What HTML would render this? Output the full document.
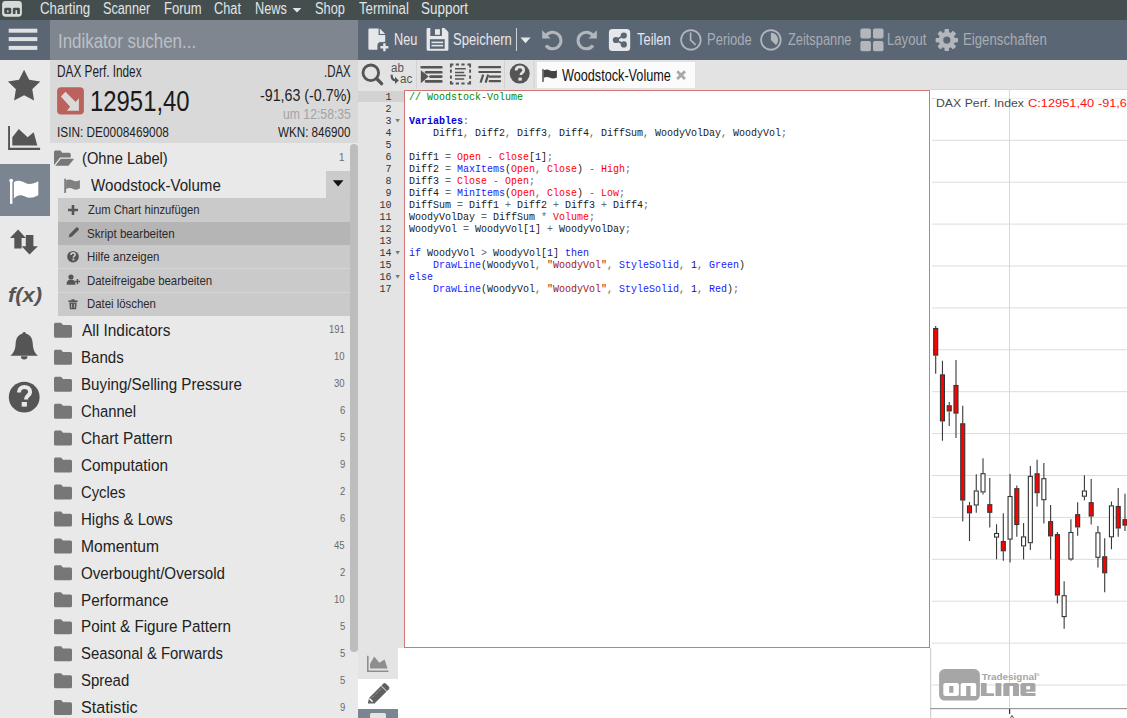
<!DOCTYPE html><html><head><meta charset="utf-8"><style>
html,body{margin:0;padding:0;width:1127px;height:718px;overflow:hidden;background:#fff;font-family:'Liberation Sans',sans-serif}
.t{position:absolute;white-space:pre}

.code,.gnum{position:absolute;font-family:'Liberation Mono',monospace;font-size:12px;line-height:13px;white-space:pre;transform:scale(0.83333,0.923077);color:#1a1a1a}
.code{transform-origin:0 0}
.gnum{transform-origin:100% 0;text-align:right;color:#333}
.code .p{color:#666}
.code .c{color:#008a00}
.code .k{color:#0000e0;font-weight:bold}
.code .k2{color:#1a1ae0}
.code .b{color:#2020ff}
.code .r{color:#ff0000}
.code .s{color:#a31515}
.code .d{color:#101080}
</style></head><body>
<div style="position:absolute;left:0px;top:0px;width:1127px;height:20px;background:#444e4e;"></div>
<div style="position:absolute;left:0px;top:20px;width:50px;height:40px;background:#5b6675;"></div>
<div style="position:absolute;left:50px;top:20px;width:308px;height:40px;background:#7f8690;"></div>
<div style="position:absolute;left:358px;top:20px;width:769px;height:40px;background:#5b6675;"></div>
<div style="position:absolute;left:0px;top:60px;width:50px;height:658px;background:#e9e9e9;"></div>
<div style="position:absolute;left:0px;top:164px;width:50px;height:52px;background:#7b8591;"></div>
<div style="position:absolute;left:50px;top:60px;width:308px;height:83px;background:#d9d9d9;"></div>
<div style="position:absolute;left:50px;top:143px;width:308px;height:575px;background:#e9e9e9;"></div>
<div style="position:absolute;left:326px;top:171px;width:24px;height:27px;background:#cbcbcb;"></div>
<div style="position:absolute;left:58px;top:198px;width:292px;height:118px;background:#cacaca;"></div>
<div style="position:absolute;left:58px;top:222px;width:292px;height:23px;background:#b5b5b5;"></div>
<div style="position:absolute;left:58px;top:268px;width:292px;height:1px;background:#d6d6d6;"></div>
<div style="position:absolute;left:58px;top:292px;width:292px;height:1px;background:#d6d6d6;"></div>
<div style="position:absolute;left:350px;top:144px;width:8px;height:508px;background:#bdbdbd;border-radius:4px"></div>
<div style="position:absolute;left:358px;top:60px;width:769px;height:30px;background:#e3e3e3;"></div>
<div style="position:absolute;left:537px;top:62px;width:158px;height:26px;background:#fbfbfb;"></div>
<div style="position:absolute;left:358px;top:90px;width:46px;height:558px;background:#e4e4e4;"></div>
<div style="position:absolute;left:358px;top:91px;width:46px;height:11px;background:#d2d2d2;"></div>
<div style="position:absolute;left:404px;top:90px;width:526px;height:558px;background:#ffffff;box-sizing:border-box;border:1px solid #d07878"></div>
<div style="position:absolute;left:358px;top:648px;width:572px;height:70px;background:#ffffff;"></div>
<div style="position:absolute;left:358px;top:648px;width:40px;height:31px;background:#e4e4e4;"></div>
<div style="position:absolute;left:358px;top:709px;width:40px;height:9px;background:#7b8591;"></div>
<svg width="1127" height="718" style="position:absolute;left:0;top:0"><rect x="930" y="90" width="197" height="628" fill="#fff"/><rect x="930" y="89" width="197" height="1" fill="#d6d6d6"/><rect x="932" y="98" width="195" height="1" fill="#f0f0f0"/><rect x="932" y="98" width="3" height="1" fill="#d0d0d0"/><rect x="930.2" y="648" width="1" height="70" fill="#c8c8c8"/><rect x="932" y="139.80" width="195" height="1" fill="#dcdcdc"/><rect x="932" y="181.70" width="195" height="1" fill="#dcdcdc"/><rect x="932" y="223.60" width="195" height="1" fill="#dcdcdc"/><rect x="932" y="265.50" width="195" height="1" fill="#dcdcdc"/><rect x="932" y="307.40" width="195" height="1" fill="#dcdcdc"/><rect x="932" y="349.30" width="195" height="1" fill="#dcdcdc"/><rect x="932" y="391.20" width="195" height="1" fill="#dcdcdc"/><rect x="932" y="433.10" width="195" height="1" fill="#dcdcdc"/><rect x="932" y="475.00" width="195" height="1" fill="#dcdcdc"/><rect x="932" y="516.90" width="195" height="1" fill="#dcdcdc"/><rect x="932" y="558.80" width="195" height="1" fill="#dcdcdc"/><rect x="932" y="600.70" width="195" height="1" fill="#dcdcdc"/><rect x="932" y="642.60" width="195" height="1" fill="#dcdcdc"/><rect x="932" y="684.50" width="195" height="1" fill="#dcdcdc"/><rect x="1009" y="90" width="1" height="619" fill="#d8d8d8"/><rect x="930" y="708" width="197" height="1.2" fill="#9a9a9a"/><rect x="1009" y="709" width="1.2" height="5" fill="#333"/><path d="M1010.5,718 l1.5,-2.6 l1.5,2.6" fill="none" stroke="#555" stroke-width="1"/><rect x="939.1" y="669.1" width="40.8" height="31.5" rx="5.5" fill="#a6a6a6"/><rect x="943.3" y="683.1" width="15.6" height="12.9" rx="2" fill="#fff"/><rect x="949.2" y="686" width="4.2" height="6.8" fill="#a6a6a6"/><path d="M960.6,696 v-10.9 a2,2 0 0 1 2,-2 h11.6 a2,2 0 0 1 2,2 v10.9 h-5.6 v-10 h-4.4 v10z" fill="#fff"/><path d="M980.9,683.1 h5.7 v10.2 h7.5 v2.7 h-13.2z" fill="#a6a6a6"/><rect x="995.5" y="683.1" width="5.9" height="12.9" fill="#a6a6a6"/><path d="M1003.3,696 v-10.9 a2,2 0 0 1 2,-2 h11.7 a2,2 0 0 1 2,2 v10.9 h-6 v-10 h-3.8 v10z" fill="#a6a6a6"/><path d="M1022.4,683.1 h11.1 a2,2 0 0 1 2,2 v6.6 h-9.2 v1.4 h9.2 v2.9 h-13.1 a2,2 0 0 1 -2,-2 v-8.9 a2,2 0 0 1 2,-2z" fill="#a6a6a6"/><rect x="1026.3" y="686.2" width="3.8" height="3.2" fill="#fff"/><text x="981.7" y="679.6" font-family="Liberation Sans" font-weight="bold" font-size="8.6" fill="#a6a6a6" textLength="55" lengthAdjust="spacingAndGlyphs">Tradesignal</text><circle cx="1038" cy="674.6" r="1.1" fill="none" stroke="#a6a6a6" stroke-width="0.6"/><path d="M935.70,326 V328 M935.70,355.6 V373.8" stroke="#3a3a3a" stroke-width="1.1"/><rect x="933.70" y="328.5" width="4" height="26.60" fill="#ff0000" stroke="#333" stroke-width="1.1"/><path d="M942.46,360.7 V374.4 M942.46,421.4 V440.7" stroke="#3a3a3a" stroke-width="1.1"/><rect x="940.46" y="374.9" width="4" height="46.00" fill="#ff0000" stroke="#333" stroke-width="1.1"/><path d="M949.22,402 V405.3 M949.22,411.4 V425.9" stroke="#3a3a3a" stroke-width="1.1"/><rect x="947.22" y="405.8" width="4" height="5.10" fill="#ff0000" stroke="#333" stroke-width="1.1"/><path d="M955.98,360 V385 M955.98,413.6 V437.9" stroke="#3a3a3a" stroke-width="1.1"/><rect x="953.98" y="385.5" width="4" height="27.60" fill="#ff0000" stroke="#333" stroke-width="1.1"/><path d="M962.74,405.8 V423.3 M962.74,500.5 V521.5" stroke="#3a3a3a" stroke-width="1.1"/><rect x="960.74" y="423.8" width="4" height="76.20" fill="#ff0000" stroke="#333" stroke-width="1.1"/><path d="M969.50,502 V505.4 M969.50,513.3 V541" stroke="#3a3a3a" stroke-width="1.1"/><rect x="967.50" y="505.9" width="4" height="6.90" fill="#ff0000" stroke="#333" stroke-width="1.1"/><path d="M976.26,474.2 V490.5 M976.26,505.5 V512.8" stroke="#3a3a3a" stroke-width="1.1"/><rect x="974.26" y="491.0" width="4" height="14.00" fill="#ffffff" stroke="#333" stroke-width="1.1"/><path d="M983.02,458.2 V473.2 M983.02,492.4 V494.6" stroke="#3a3a3a" stroke-width="1.1"/><rect x="981.02" y="473.7" width="4" height="18.20" fill="#ffffff" stroke="#333" stroke-width="1.1"/><path d="M989.78,478 V504.2 M989.78,512.8 V527.4" stroke="#3a3a3a" stroke-width="1.1"/><rect x="987.78" y="504.7" width="4" height="7.60" fill="#ff0000" stroke="#333" stroke-width="1.1"/><path d="M996.54,524.2 V533 M996.54,537.6 V559.2" stroke="#3a3a3a" stroke-width="1.1"/><rect x="994.54" y="533.5" width="4" height="3.60" fill="#ffffff" stroke="#333" stroke-width="1.1"/><path d="M1003.30,513.3 V541.1 M1003.30,551.3 V560.7" stroke="#3a3a3a" stroke-width="1.1"/><rect x="1001.30" y="541.6" width="4" height="9.20" fill="#ff0000" stroke="#333" stroke-width="1.1"/><path d="M1010.06,473.9 V496 M1010.06,539.6 V562.5" stroke="#3a3a3a" stroke-width="1.1"/><rect x="1008.06" y="496.5" width="4" height="42.60" fill="#ffffff" stroke="#333" stroke-width="1.1"/><path d="M1016.82,485.6 V488.2 M1016.82,525 V536.7" stroke="#3a3a3a" stroke-width="1.1"/><rect x="1014.82" y="488.7" width="4" height="35.80" fill="#ff0000" stroke="#333" stroke-width="1.1"/><path d="M1023.58,523 V536.4 M1023.58,546.4 V559.5" stroke="#3a3a3a" stroke-width="1.1"/><rect x="1021.58" y="536.9" width="4" height="9.00" fill="#ffffff" stroke="#333" stroke-width="1.1"/><path d="M1030.34,466 V475.9 M1030.34,543.2 V549.9" stroke="#3a3a3a" stroke-width="1.1"/><rect x="1028.34" y="476.4" width="4" height="66.30" fill="#ffffff" stroke="#333" stroke-width="1.1"/><path d="M1037.10,459.8 V473.3 M1037.10,493.2 V506.6" stroke="#3a3a3a" stroke-width="1.1"/><rect x="1035.10" y="473.8" width="4" height="18.90" fill="#ff0000" stroke="#333" stroke-width="1.1"/><path d="M1043.86,463 V478.2 M1043.86,500.2 V523.6" stroke="#3a3a3a" stroke-width="1.1"/><rect x="1041.86" y="478.7" width="4" height="21.00" fill="#ffffff" stroke="#333" stroke-width="1.1"/><path d="M1050.62,505.1 V521.2 M1050.62,536.4 V559.5" stroke="#3a3a3a" stroke-width="1.1"/><rect x="1048.62" y="521.7" width="4" height="14.20" fill="#ff0000" stroke="#333" stroke-width="1.1"/><path d="M1057.38,532 V534.1 M1057.38,595.5 V603.4" stroke="#3a3a3a" stroke-width="1.1"/><rect x="1055.38" y="534.6" width="4" height="60.40" fill="#ff0000" stroke="#333" stroke-width="1.1"/><path d="M1064.14,581.2 V595.2 M1064.14,617.1 V628.8" stroke="#3a3a3a" stroke-width="1.1"/><rect x="1062.14" y="595.7" width="4" height="20.90" fill="#ffffff" stroke="#333" stroke-width="1.1"/><path d="M1070.90,519.2 V532 M1070.90,559.5 V560.7" stroke="#3a3a3a" stroke-width="1.1"/><rect x="1068.90" y="532.5" width="4" height="26.50" fill="#ffffff" stroke="#333" stroke-width="1.1"/><path d="M1077.66,502.2 V514.2 M1077.66,527.4 V535.8" stroke="#3a3a3a" stroke-width="1.1"/><rect x="1075.66" y="514.7" width="4" height="12.20" fill="#ff0000" stroke="#333" stroke-width="1.1"/><path d="M1084.42,475.3 V490.5 M1084.42,496.7 V500.2" stroke="#3a3a3a" stroke-width="1.1"/><rect x="1082.42" y="491.0" width="4" height="5.20" fill="#ffffff" stroke="#333" stroke-width="1.1"/><path d="M1091.18,479.1 V502.2 M1091.18,516.5 V524.4" stroke="#3a3a3a" stroke-width="1.1"/><rect x="1089.18" y="502.7" width="4" height="13.30" fill="#ff0000" stroke="#333" stroke-width="1.1"/><path d="M1097.94,525.9 V532.3 M1097.94,557.8 V567.4" stroke="#3a3a3a" stroke-width="1.1"/><rect x="1095.94" y="532.8" width="4" height="24.50" fill="#ffffff" stroke="#333" stroke-width="1.1"/><path d="M1104.70,538.2 V556.3 M1104.70,573.3 V592.3" stroke="#3a3a3a" stroke-width="1.1"/><rect x="1102.70" y="556.8" width="4" height="16.00" fill="#ff0000" stroke="#333" stroke-width="1.1"/><path d="M1111.46,501.6 V505.4 M1111.46,537.3 V549.3" stroke="#3a3a3a" stroke-width="1.1"/><rect x="1109.46" y="505.9" width="4" height="30.90" fill="#ffffff" stroke="#333" stroke-width="1.1"/><path d="M1118.22,487.9 V506 M1118.22,528.5 V536.7" stroke="#3a3a3a" stroke-width="1.1"/><rect x="1116.22" y="506.5" width="4" height="21.50" fill="#ff0000" stroke="#333" stroke-width="1.1"/><path d="M1124.98,493.7 V519.2 M1124.98,525.6 V530.9" stroke="#3a3a3a" stroke-width="1.1"/><rect x="1122.98" y="519.7" width="4" height="5.40" fill="#ff0000" stroke="#333" stroke-width="1.1"/></svg>
<svg width="1127" height="718" style="position:absolute;left:0;top:0"><rect x="2.1" y="1.1" width="19.8" height="15.6" rx="3.4" fill="#d8dada"/><path d="M5.6,7.8 h4.3 a1.4,1.4 0 0 1 1.4,1.4 v3.3 a1.4,1.4 0 0 1 -1.4,1.4 h-4.3 a1.4,1.4 0 0 1 -1.4,-1.4 v-3.3 a1.4,1.4 0 0 1 1.4,-1.4z M7.1,10.3 v2.2 h1.4 v-2.2z" fill="#444e4e" fill-rule="evenodd"/><path d="M12.8,13.9 v-4.7 a1.4,1.4 0 0 1 1.4,-1.4 h4.3 a1.4,1.4 0 0 1 1.4,1.4 v4.7 h-2.8 v-3.6 h-1.6 v3.6z" fill="#444e4e"/><rect x="8.7" y="28.7" width="28.6" height="4" fill="#dfe1e3"/><rect x="8.7" y="37.1" width="28.6" height="4" fill="#dfe1e3"/><rect x="8.7" y="45.9" width="28.6" height="4" fill="#dfe1e3"/><polygon points="292.6,8 301.4,8 297,12.4" fill="#e2e4e4"/><path d="M369.6,28.4 h9 v6.6 h6.6 v12 l-1.2,0 v-2 a3,3 0 0 0 -3,-3 h-0 a3.6,3.6 0 0 0 -3.6,3.6 v0.6 a2.6,2.6 0 0 0 0,0 v3.6 h-7.8 a1.2,1.2 0 0 1 -1.2,-1.2 v-19 a1.2,1.2 0 0 1 1.2,-1.2z" fill="#e6e7e9"/><polygon points="379.8,28.6 385.2,34 379.8,34" fill="#e6e7e9"/><circle cx="384.4" cy="47.2" r="5.4" fill="#5b6675"/><path d="M384.4,43.2 v8 M380.4,47.2 h8" stroke="#e6e7e9" stroke-width="2.4"/><path d="M427.8,28 h16.6 l4,4 v17.6 a1.2,1.2 0 0 1 -1.2,1.2 h-19.4 a1.2,1.2 0 0 1 -1.2,-1.2 v-20.4 a1.2,1.2 0 0 1 1.2,-1.2z" fill="#e6e7e9"/><rect x="430.3" y="28" width="11.6" height="8" fill="#5b6675"/><rect x="435" y="29.2" width="4.9" height="5.6" fill="#e6e7e9"/><rect x="429.9" y="39.2" width="14.8" height="9.6" fill="#5b6675"/><rect x="431.5" y="41.6" width="11.6" height="1.6" fill="#e6e7e9"/><rect x="431.5" y="44.8" width="11.6" height="1.6" fill="#e6e7e9"/><rect x="516" y="28" width="1" height="23" fill="#cfd2d6"/><polygon points="520.5,37.6 530.6,37.6 525.55,43.2" fill="#e6e7e9"/><path d="M546.3,35.2 A8.3,8.3 0 1 1 546.0,45.5" fill="none" stroke="#b3b7bc" stroke-width="3"/><polygon points="542.2,30.2 550.6,38.4 542.2,38.4" fill="#b3b7bc"/><path d="M592.7,35.2 A8.3,8.3 0 1 0 593.0,45.5" fill="none" stroke="#b3b7bc" stroke-width="3"/><polygon points="596.8,30.2 588.4,38.4 596.8,38.4" fill="#b3b7bc"/><rect x="608.9" y="29.1" width="21.3" height="21.8" rx="3.5" fill="#e6e7e9"/><path d="M615.9,40 L623.8,35.5 M615.9,40 L623.8,44.4" stroke="#5b6675" stroke-width="1.8"/><circle cx="615.9" cy="40" r="3.1" fill="#5b6675"/><circle cx="623.8" cy="35.5" r="3.1" fill="#5b6675"/><circle cx="623.8" cy="44.4" r="3.1" fill="#5b6675"/><circle cx="690.9" cy="39.9" r="9.8" fill="none" stroke="#b3b7bc" stroke-width="1.7"/><path d="M690.6,32.6 V40.2 L695.7,44.9" fill="none" stroke="#b3b7bc" stroke-width="1.6"/><circle cx="770.9" cy="39.9" r="9.8" fill="none" stroke="#b3b7bc" stroke-width="1.7"/><path d="M770.9,39.9 V32.7 A7.2,7.2 0 0 1 775.9,45.1 Z" fill="#b3b7bc"/><rect x="860.4" y="28.4" width="10.5" height="10.2" rx="1.8" fill="#b3b7bc"/><rect x="860.4" y="41.1" width="10.5" height="10.2" rx="1.8" fill="#b3b7bc"/><rect x="873" y="28.4" width="10.5" height="10.2" rx="1.8" fill="#b3b7bc"/><rect x="873" y="41.1" width="10.5" height="10.2" rx="1.8" fill="#b3b7bc"/><rect x="944.70" y="29.10" width="4.2" height="22.00" rx="0.8" fill="#b3b7bc" transform="rotate(0.0 946.8 40.1)"/><rect x="944.70" y="29.10" width="4.2" height="22.00" rx="0.8" fill="#b3b7bc" transform="rotate(45.0 946.8 40.1)"/><rect x="944.70" y="29.10" width="4.2" height="22.00" rx="0.8" fill="#b3b7bc" transform="rotate(90.0 946.8 40.1)"/><rect x="944.70" y="29.10" width="4.2" height="22.00" rx="0.8" fill="#b3b7bc" transform="rotate(135.0 946.8 40.1)"/><rect x="944.70" y="29.10" width="4.2" height="22.00" rx="0.8" fill="#b3b7bc" transform="rotate(180.0 946.8 40.1)"/><rect x="944.70" y="29.10" width="4.2" height="22.00" rx="0.8" fill="#b3b7bc" transform="rotate(225.0 946.8 40.1)"/><rect x="944.70" y="29.10" width="4.2" height="22.00" rx="0.8" fill="#b3b7bc" transform="rotate(270.0 946.8 40.1)"/><rect x="944.70" y="29.10" width="4.2" height="22.00" rx="0.8" fill="#b3b7bc" transform="rotate(315.0 946.8 40.1)"/><circle cx="946.8" cy="40.1" r="8.2" fill="#b3b7bc"/><circle cx="946.8" cy="40.1" r="3.6" fill="#5b6675"/><polygon points="24.10,69.70 29.15,79.74 40.27,81.45 32.28,89.36 34.09,100.45 24.10,95.30 14.11,100.45 15.92,89.36 7.93,81.45 19.05,79.74" fill="#555555"/><path d="M8.1,126 h1.9 v21.7 h30.1 v2.3 h-32z" fill="#555555"/><polygon points="12.3,137.2 18.8,128.9 27.6,137.2 33.7,132.3 37.3,145.6 12.3,145.6" fill="#555555"/><rect x="10" y="180.5" width="2.4" height="23.3" fill="#ffffff"/><circle cx="11.2" cy="180.6" r="1.9" fill="#ffffff"/><path d="M13.9,182.2 C18,179.5 22,181 25,182.8 C29,185 33,184 38.3,181.2 V195.2 C33,198 29,198.5 25,196.5 C22,195 18,194 13.9,198.5 Z" fill="#ffffff"/><polygon points="18.1,229.5 25.8,237.9 21.6,237.9 21.6,248.4 14.3,248.4 14.3,237.9 10,237.9" fill="#555555"/><polygon points="25.8,235.1 33.4,235.1 33.4,246.3 37.9,246.3 29.5,254.6 21.6,246.3 25.8,246.3" fill="#555555"/><path d="M24.2,332 c1.2,0 1.8,0.8 1.8,1.8 c5,1.2 6.6,5.5 6.8,10.5 c0.3,5.8 2.2,8.8 5.2,11.5 h-27.6 c3,-2.7 4.9,-5.7 5.2,-11.5 c0.2,-5 1.8,-9.3 6.8,-10.5 c0,-1 0.6,-1.8 1.8,-1.8z" fill="#555555"/><path d="M20.9,356.2 a3.3,3.3 0 0 0 6.6,0z" fill="#555555"/><circle cx="24.2" cy="397.2" r="15.4" fill="#555555"/><path d="M18.9,392.6 c0,-3.6 2.4,-5.6 5.6,-5.6 c3.2,0 5.6,2 5.6,5 c0,3.6 -4,3.8 -4,6.6 v0.8" fill="none" stroke="#e9e9e9" stroke-width="4"/><rect x="21.7" y="402" width="5.2" height="4.6" fill="#e9e9e9"/><rect x="57.1" y="87.3" width="26.8" height="27.3" rx="4" fill="#bc625d"/><polygon points="65.4,91.8 75.6,102 78.9,98.2 78.9,110.8 67,110.8 70.1,106.7 60.9,96.6" fill="#dadada"/><path d="M55.6,150.4 h5 l1.6,2.4 h7 a1.5,1.5 0 0 1 1.5,1.5 v3.2 h-10.6 l-5.9,7.6 a0.4,0.4 0 0 1 -0.2,0 v-13.2 a1.5,1.5 0 0 1 1.6,-1.5z" fill="#777777"/><path d="M60.8,158.8 h13.3 l-5.6,6.9 h-13.2z" fill="#777777"/><rect x="64.2" y="178.7" width="1.9" height="14.2" fill="#808080"/><path d="M66.1,180.2 C69,179 71,179.6 73,180.6 C75.5,181.8 77.5,181.2 79.9,180 V188.6 C77.5,189.8 75.5,190.2 73,189 C71,188 69,187.6 66.1,189 Z" fill="#808080"/><polygon points="332.8,180.2 343.5,180.2 338.15,186.6" fill="#111"/><path d="M73,205 v10 M68,210 h10" stroke="#555555" stroke-width="2.6"/><path d="M68.6,237.6 l1,-3.4 l6.6,-6.6 a1,1 0 0 1 1.4,0 l1,1 a1,1 0 0 1 0,1.4 l-6.6,6.6 z" fill="#555555"/><circle cx="73" cy="256.7" r="5.8" fill="#555555"/><path d="M71,255 c0,-1.3 0.9,-2.1 2.1,-2.1 c1.2,0 2,0.8 2,1.8 c0,1.5 -1.7,1.5 -1.7,2.7 v0.3" fill="none" stroke="#cacaca" stroke-width="1.6"/><rect x="72.4" y="258.6" width="2" height="1.8" fill="#cacaca"/><circle cx="71" cy="277" r="2.6" fill="#555555"/><path d="M66.7,284.8 v-1.6 c0,-2 1.6,-3.4 3.4,-3.4 h1.8 c1.8,0 3.4,1.4 3.4,3.4 v1.6z" fill="#555555"/><path d="M77.4,279 v5.2 M74.8,281.6 h5.2" stroke="#555555" stroke-width="1.5"/><rect x="68.4" y="300.4" width="9.2" height="1.6" fill="#555555"/><rect x="71.4" y="299.3" width="3.2" height="1.6" fill="#555555"/><path d="M69.3,302.6 h7.4 l-0.6,6.6 h-6.2z" fill="#555555"/><path d="M71.6,303.8 v4 M74.4,303.8 v4" stroke="#cacaca" stroke-width="0.8"/><path d="M55.5,322.8 h5.5 l2,2.2 h7.5 a1.5,1.5 0 0 1 1.5,1.5 v9.8 a1.5,1.5 0 0 1 -1.5,1.5 h-15 a1.5,1.5 0 0 1 -1.5,-1.5 v-12 a1.5,1.5 0 0 1 1.5,-1.5z" fill="#777777"/><path d="M55.5,349.75 h5.5 l2,2.2 h7.5 a1.5,1.5 0 0 1 1.5,1.5 v9.8 a1.5,1.5 0 0 1 -1.5,1.5 h-15 a1.5,1.5 0 0 1 -1.5,-1.5 v-12 a1.5,1.5 0 0 1 1.5,-1.5z" fill="#777777"/><path d="M55.5,376.7 h5.5 l2,2.2 h7.5 a1.5,1.5 0 0 1 1.5,1.5 v9.8 a1.5,1.5 0 0 1 -1.5,1.5 h-15 a1.5,1.5 0 0 1 -1.5,-1.5 v-12 a1.5,1.5 0 0 1 1.5,-1.5z" fill="#777777"/><path d="M55.5,403.65000000000003 h5.5 l2,2.2 h7.5 a1.5,1.5 0 0 1 1.5,1.5 v9.8 a1.5,1.5 0 0 1 -1.5,1.5 h-15 a1.5,1.5 0 0 1 -1.5,-1.5 v-12 a1.5,1.5 0 0 1 1.5,-1.5z" fill="#777777"/><path d="M55.5,430.6 h5.5 l2,2.2 h7.5 a1.5,1.5 0 0 1 1.5,1.5 v9.8 a1.5,1.5 0 0 1 -1.5,1.5 h-15 a1.5,1.5 0 0 1 -1.5,-1.5 v-12 a1.5,1.5 0 0 1 1.5,-1.5z" fill="#777777"/><path d="M55.5,457.55 h5.5 l2,2.2 h7.5 a1.5,1.5 0 0 1 1.5,1.5 v9.8 a1.5,1.5 0 0 1 -1.5,1.5 h-15 a1.5,1.5 0 0 1 -1.5,-1.5 v-12 a1.5,1.5 0 0 1 1.5,-1.5z" fill="#777777"/><path d="M55.5,484.5 h5.5 l2,2.2 h7.5 a1.5,1.5 0 0 1 1.5,1.5 v9.8 a1.5,1.5 0 0 1 -1.5,1.5 h-15 a1.5,1.5 0 0 1 -1.5,-1.5 v-12 a1.5,1.5 0 0 1 1.5,-1.5z" fill="#777777"/><path d="M55.5,511.45 h5.5 l2,2.2 h7.5 a1.5,1.5 0 0 1 1.5,1.5 v9.8 a1.5,1.5 0 0 1 -1.5,1.5 h-15 a1.5,1.5 0 0 1 -1.5,-1.5 v-12 a1.5,1.5 0 0 1 1.5,-1.5z" fill="#777777"/><path d="M55.5,538.4 h5.5 l2,2.2 h7.5 a1.5,1.5 0 0 1 1.5,1.5 v9.8 a1.5,1.5 0 0 1 -1.5,1.5 h-15 a1.5,1.5 0 0 1 -1.5,-1.5 v-12 a1.5,1.5 0 0 1 1.5,-1.5z" fill="#777777"/><path d="M55.5,565.3499999999999 h5.5 l2,2.2 h7.5 a1.5,1.5 0 0 1 1.5,1.5 v9.8 a1.5,1.5 0 0 1 -1.5,1.5 h-15 a1.5,1.5 0 0 1 -1.5,-1.5 v-12 a1.5,1.5 0 0 1 1.5,-1.5z" fill="#777777"/><path d="M55.5,592.3 h5.5 l2,2.2 h7.5 a1.5,1.5 0 0 1 1.5,1.5 v9.8 a1.5,1.5 0 0 1 -1.5,1.5 h-15 a1.5,1.5 0 0 1 -1.5,-1.5 v-12 a1.5,1.5 0 0 1 1.5,-1.5z" fill="#777777"/><path d="M55.5,619.25 h5.5 l2,2.2 h7.5 a1.5,1.5 0 0 1 1.5,1.5 v9.8 a1.5,1.5 0 0 1 -1.5,1.5 h-15 a1.5,1.5 0 0 1 -1.5,-1.5 v-12 a1.5,1.5 0 0 1 1.5,-1.5z" fill="#777777"/><path d="M55.5,646.1999999999999 h5.5 l2,2.2 h7.5 a1.5,1.5 0 0 1 1.5,1.5 v9.8 a1.5,1.5 0 0 1 -1.5,1.5 h-15 a1.5,1.5 0 0 1 -1.5,-1.5 v-12 a1.5,1.5 0 0 1 1.5,-1.5z" fill="#777777"/><path d="M55.5,673.1499999999999 h5.5 l2,2.2 h7.5 a1.5,1.5 0 0 1 1.5,1.5 v9.8 a1.5,1.5 0 0 1 -1.5,1.5 h-15 a1.5,1.5 0 0 1 -1.5,-1.5 v-12 a1.5,1.5 0 0 1 1.5,-1.5z" fill="#777777"/><path d="M55.5,700.0999999999999 h5.5 l2,2.2 h7.5 a1.5,1.5 0 0 1 1.5,1.5 v9.8 a1.5,1.5 0 0 1 -1.5,1.5 h-15 a1.5,1.5 0 0 1 -1.5,-1.5 v-12 a1.5,1.5 0 0 1 1.5,-1.5z" fill="#777777"/><circle cx="370.8" cy="72.8" r="7.8" fill="none" stroke="#555555" stroke-width="2.8"/><path d="M377,79 L381.6,83.6" stroke="#555555" stroke-width="3.4" stroke-linecap="round"/><rect x="416" y="60" width="1" height="29" fill="#d2d2d2"/><rect x="504" y="60" width="1" height="29" fill="#d2d2d2"/><rect x="533.5" y="60" width="1" height="29" fill="#d2d2d2"/><path d="M421.6,67.3 h19.8 M426,72.2 h15.4 M430.4,76.6 h11 M426,81.4 h15.4" stroke="#555555" stroke-width="2.6" stroke-linecap="round"/><polygon points="420.8,70.2 428.6,76.6 420.8,83.2" fill="#555555"/><path d="M450,64.5 H453.4 M450,83.5 H453.4 M455.8,64.5 H459 M455.8,83.5 H459 M461.4,64.5 H464.6 M461.4,83.5 H464.6 M467.4,64.5 H471 M467.4,83.5 H471 M450.9,63.6 V67.4 M470.1,63.6 V67.4 M450.9,69.6 V72.8 M470.1,69.6 V72.8 M450.9,75.6 V78.8 M470.1,75.6 V78.8 M450.9,81 V84.4 M470.1,81 V84.4 " stroke="#555555" stroke-width="1.9" fill="none"/><path d="M455,68.8 h10.8 M455,72.4 h9.2 M455,75.6 h10.8 M455,78.9 h9.2" stroke="#555555" stroke-width="1.5"/><path d="M479.3,67.2 h20.8 M479.3,72 h20.8 M489.7,76.6 h10.4 M489.7,81.2 h10.4" stroke="#555555" stroke-width="2.2" stroke-linecap="round"/><path d="M480.6,82.6 l2.6,-8 M485.6,82.6 l2.6,-8" stroke="#555555" stroke-width="2.2"/><circle cx="519.7" cy="73.6" r="10" fill="#555555"/><path d="M516.1,70.6 c0,-2.3 1.6,-3.7 3.8,-3.7 c2.2,0 3.8,1.3 3.8,3.3 c0,2.5 -2.7,2.5 -2.7,4.4 v0.5" fill="none" stroke="#e3e3e3" stroke-width="2.7"/><rect x="518.4" y="77.6" width="3.4" height="3" fill="#e3e3e3"/><rect x="542.3" y="69.1" width="1.4" height="12.8" fill="#444"/><path d="M543.7,70.2 C546.5,69.2 548,69.6 550,70.4 C552.5,71.4 554.5,71.2 556.9,70.2 V77.6 C554.5,78.6 552.5,78.8 550,77.8 C548,77 546.5,76.8 543.7,77.8 Z" fill="#444"/><path d="M677.2,71.2 L685,79.1 M685,71.2 L677.2,79.1" stroke="#a8a8a8" stroke-width="2.8"/><path d="M367,655.8 h1.6 v14.6 h19.8 v1.6 h-21.4z" fill="#8e8e8e"/><polygon points="370,668.5 370,664 374.2,656.6 379.4,662.8 384.6,659.5 387.5,668.5" fill="#8e8e8e"/><path d="M367.8,703.5 l1.2,-5.6 l14.2,-14.2 a2,2 0 0 1 2.8,0 l2.8,2.8 a2,2 0 0 1 0,2.8 l-14.2,14.2z" fill="#606060"/><path d="M381.2,685.8 l5.6,5.6" stroke="#fff" stroke-width="0.9"/><path d="M371.5,698.2 l10.5,-10.5" stroke="#fff" stroke-width="0.6" stroke-dasharray="1.2,0.8" opacity="0.8"/><path d="M369.4,698.6 l3.2,3.2" stroke="#fff" stroke-width="1.4"/><rect x="370" y="713" width="16" height="8" rx="1.5" fill="#e4e4e4"/><polygon points="395.4,118.9 399.9,118.9 397.65,122.6" fill="#777"/><polygon points="395.4,250.9 399.9,250.9 397.65,254.6" fill="#777"/><polygon points="395.4,274.9 399.9,274.9 397.65,278.6" fill="#777"/><path d="M391.6,74.8 c0,3.2 1.4,5.6 4.2,5.6" fill="none" stroke="#555" stroke-width="2.2"/><polygon points="395,76.8 398.8,80.4 395,84" fill="#555"/></svg>
<div class="code" style="left:408.7px;top:91.85px"><span class="c">// Woodstock-Volume</span>
 
<span class="k">Variables</span><span class="p">:</span>
    Diff1<span class="p">, </span>Diff2<span class="p">, </span>Diff3<span class="p">, </span>Diff4<span class="p">, </span>DiffSum<span class="p">, </span>WoodyVolDay<span class="p">, </span>WoodyVol<span class="p">;</span>
 
Diff1 <span class="p">=</span> <span class="r">Open</span><span class="p"> - </span><span class="r">Close</span>[<span class="d">1</span>]<span class="p">;</span>
Diff2 <span class="p">=</span> <span class="b">MaxItems</span>(<span class="r">Open</span><span class="p">, </span><span class="r">Close</span>)<span class="p"> - </span><span class="r">High</span><span class="p">;</span>
Diff3 <span class="p">=</span> <span class="r">Close</span><span class="p"> - </span><span class="r">Open</span><span class="p">;</span>
Diff4 <span class="p">=</span> <span class="b">MinItems</span>(<span class="r">Open</span><span class="p">, </span><span class="r">Close</span>)<span class="p"> - </span><span class="r">Low</span><span class="p">;</span>
DiffSum <span class="p">=</span> Diff1 <span class="p">+</span> Diff2 <span class="p">+</span> Diff3 <span class="p">+</span> Diff4<span class="p">;</span>
WoodyVolDay <span class="p">=</span> DiffSum <span class="p">*</span> <span class="r">Volume</span><span class="p">;</span>
WoodyVol <span class="p">=</span> WoodyVol[<span class="d">1</span>]<span class="p"> + </span>WoodyVolDay<span class="p">;</span>
 
<span class="k2">if</span> WoodyVol <span class="p">&gt;</span> WoodyVol[<span class="d">1</span>] <span class="k2">then</span>
    <span class="b">DrawLine</span>(WoodyVol<span class="p">, </span><span class="s">&quot;WoodyVol&quot;</span><span class="p">, </span><span class="b">StyleSolid</span><span class="p">, </span><span class="d">1</span><span class="p">, </span><span class="b">Green</span>)
<span class="k2">else</span>
    <span class="b">DrawLine</span>(WoodyVol<span class="p">, </span><span class="s">&quot;WoodyVol&quot;</span><span class="p">, </span><span class="b">StyleSolid</span><span class="p">, </span><span class="d">1</span><span class="p">, </span><span class="b">Red</span>)<span class="p">;</span></div>
<div class="gnum" style="right:735.80px;top:91.85px">1
2
3
4
5
6
7
8
9
10
11
12
13
14
15
16
17</div>
<div class=t style="left:39.57px;transform-origin:0 0;top:1.00px;font-size:16px;line-height:16px;color:#e2e4e4;font-weight:400;font-style:normal;font-family:'Liberation Sans',sans-serif;transform:scaleX(0.8305)">Charting</div>
<div class=t style="left:102.81px;transform-origin:0 0;top:1.00px;font-size:16px;line-height:16px;color:#e2e4e4;font-weight:400;font-style:normal;font-family:'Liberation Sans',sans-serif;transform:scaleX(0.7932)">Scanner</div>
<div class=t style="left:163.79px;transform-origin:0 0;top:1.00px;font-size:16px;line-height:16px;color:#e2e4e4;font-weight:400;font-style:normal;font-family:'Liberation Sans',sans-serif;transform:scaleX(0.8133)">Forum</div>
<div class=t style="left:214.20px;transform-origin:0 0;top:1.00px;font-size:16px;line-height:16px;color:#e2e4e4;font-weight:400;font-style:normal;font-family:'Liberation Sans',sans-serif;transform:scaleX(0.7970)">Chat</div>
<div class=t style="left:254.70px;transform-origin:0 0;top:1.00px;font-size:16px;line-height:16px;color:#e2e4e4;font-weight:400;font-style:normal;font-family:'Liberation Sans',sans-serif;transform:scaleX(0.7974)">News</div>
<div class=t style="left:315.10px;transform-origin:0 0;top:1.00px;font-size:16px;line-height:16px;color:#e2e4e4;font-weight:400;font-style:normal;font-family:'Liberation Sans',sans-serif;transform:scaleX(0.8000)">Shop</div>
<div class=t style="left:359.10px;transform-origin:0 0;top:1.00px;font-size:16px;line-height:16px;color:#e2e4e4;font-weight:400;font-style:normal;font-family:'Liberation Sans',sans-serif;transform:scaleX(0.8250)">Terminal</div>
<div class=t style="left:421.46px;transform-origin:0 0;top:1.00px;font-size:16px;line-height:16px;color:#e2e4e4;font-weight:400;font-style:normal;font-family:'Liberation Sans',sans-serif;transform:scaleX(0.8400)">Support</div>
<div class=t style="left:57.56px;transform-origin:0 0;top:31.00px;font-size:20.6px;line-height:20.6px;color:#bcc0c5;font-weight:400;font-style:normal;font-family:'Liberation Sans',sans-serif;transform:scaleX(0.8206)">Indikator suchen...</div>
<div class=t style="left:394.02px;transform-origin:0 0;top:31.00px;font-size:16.3px;line-height:16.3px;color:#e6e8ea;font-weight:400;font-style:normal;font-family:'Liberation Sans',sans-serif;transform:scaleX(0.7821)">Neu</div>
<div class=t style="left:453.10px;transform-origin:0 0;top:31.00px;font-size:16.3px;line-height:16.3px;color:#e6e8ea;font-weight:400;font-style:normal;font-family:'Liberation Sans',sans-serif;transform:scaleX(0.8028)">Speichern</div>
<div class=t style="left:636.70px;transform-origin:0 0;top:31.00px;font-size:16.3px;line-height:16.3px;color:#e6e8ea;font-weight:400;font-style:normal;font-family:'Liberation Sans',sans-serif;transform:scaleX(0.7929)">Teilen</div>
<div class=t style="left:706.60px;transform-origin:0 0;top:31.00px;font-size:16.3px;line-height:16.3px;color:#a9adb3;font-weight:400;font-style:normal;font-family:'Liberation Sans',sans-serif;transform:scaleX(0.7982)">Periode</div>
<div class=t style="left:787.60px;transform-origin:0 0;top:31.00px;font-size:16.3px;line-height:16.3px;color:#a9adb3;font-weight:400;font-style:normal;font-family:'Liberation Sans',sans-serif;transform:scaleX(0.7875)">Zeitspanne</div>
<div class=t style="left:887.19px;transform-origin:0 0;top:31.00px;font-size:16.3px;line-height:16.3px;color:#a9adb3;font-weight:400;font-style:normal;font-family:'Liberation Sans',sans-serif;transform:scaleX(0.8063)">Layout</div>
<div class=t style="left:962.59px;transform-origin:0 0;top:31.00px;font-size:16.3px;line-height:16.3px;color:#a9adb3;font-weight:400;font-style:normal;font-family:'Liberation Sans',sans-serif;transform:scaleX(0.8119)">Eigenschaften</div>
<div class=t style="left:56.76px;transform-origin:0 0;top:64.00px;font-size:16px;line-height:16px;color:#1e1e1e;font-weight:400;font-style:normal;font-family:'Liberation Sans',sans-serif;transform:scaleX(0.7372)">DAX Perf. Index</div>
<div class=t style="left:324.09px;transform-origin:0 0;top:64.00px;font-size:16px;line-height:16px;color:#1e1e1e;font-weight:400;font-style:normal;font-family:'Liberation Sans',sans-serif;transform:scaleX(0.7139)">.DAX</div>
<div class=t style="left:90.15px;transform-origin:0 0;top:87.00px;font-size:29px;line-height:29px;color:#1a1a1a;font-weight:400;font-style:normal;font-family:'Liberation Sans',sans-serif;transform:scaleX(0.8237)">12951,40</div>
<div class=t style="left:260.38px;transform-origin:0 0;top:87.00px;font-size:17.4px;line-height:17.4px;color:#1e1e1e;font-weight:400;font-style:normal;font-family:'Liberation Sans',sans-serif;transform:scaleX(0.8193)">-91,63 (-0.7%)</div>
<div class=t style="left:283.34px;transform-origin:0 0;top:107.00px;font-size:14.2px;line-height:14.2px;color:#a3a3a3;font-weight:400;font-style:normal;font-family:'Liberation Sans',sans-serif;transform:scaleX(0.8610)">um 12:58:35</div>
<div class=t style="left:56.70px;transform-origin:0 0;top:125.00px;font-size:14.8px;line-height:14.8px;color:#1e1e1e;font-weight:400;font-style:normal;font-family:'Liberation Sans',sans-serif;transform:scaleX(0.7993)">ISIN: DE0008469008</div>
<div class=t style="left:278.20px;transform-origin:0 0;top:125.00px;font-size:14.8px;line-height:14.8px;color:#1e1e1e;font-weight:400;font-style:normal;font-family:'Liberation Sans',sans-serif;transform:scaleX(0.7859)">WKN: 846900</div>
<div class=t style="left:81.84px;transform-origin:0 0;top:150.00px;font-size:17px;line-height:17px;color:#222;font-weight:400;font-style:normal;font-family:'Liberation Sans',sans-serif;transform:scaleX(0.8639)">(Ohne Label)</div>
<div class=t style="left:339.10px;transform-origin:0 0;top:151.00px;font-size:11.6px;line-height:11.6px;color:#6a6a6a;font-weight:400;font-style:normal;font-family:'Liberation Sans',sans-serif;transform:scaleX(0.8500)">1</div>
<div class=t style="left:90.50px;transform-origin:0 0;top:178.00px;font-size:16.7px;line-height:16.7px;color:#222;font-weight:400;font-style:normal;font-family:'Liberation Sans',sans-serif;transform:scaleX(0.9049)">Woodstock-Volume</div>
<div class=t style="left:88.10px;transform-origin:0 0;top:204.00px;font-size:12.4px;line-height:12.4px;color:#2a2a2a;font-weight:400;font-style:normal;font-family:'Liberation Sans',sans-serif;transform:scaleX(0.9098)">Zum Chart hinzufügen</div>
<div class=t style="left:87.16px;transform-origin:0 0;top:228.00px;font-size:12.4px;line-height:12.4px;color:#2a2a2a;font-weight:400;font-style:normal;font-family:'Liberation Sans',sans-serif;transform:scaleX(0.9370)">Skript bearbeiten</div>
<div class=t style="left:87.18px;transform-origin:0 0;top:251.00px;font-size:12.4px;line-height:12.4px;color:#2a2a2a;font-weight:400;font-style:normal;font-family:'Liberation Sans',sans-serif;transform:scaleX(0.9221)">Hilfe anzeigen</div>
<div class=t style="left:87.18px;transform-origin:0 0;top:275.00px;font-size:12.4px;line-height:12.4px;color:#2a2a2a;font-weight:400;font-style:normal;font-family:'Liberation Sans',sans-serif;transform:scaleX(0.9224)">Dateifreigabe bearbeiten</div>
<div class=t style="left:87.18px;transform-origin:0 0;top:298.00px;font-size:12.4px;line-height:12.4px;color:#2a2a2a;font-weight:400;font-style:normal;font-family:'Liberation Sans',sans-serif;transform:scaleX(0.9176)">Datei löschen</div>
<div class=t style="left:82.30px;transform-origin:0 0;top:322.00px;font-size:17.2px;line-height:17.2px;color:#222;font-weight:400;font-style:normal;font-family:'Liberation Sans',sans-serif;transform:scaleX(0.8980)">All Indicators</div>
<div class=t style="left:328.92px;transform-origin:0 0;top:323.00px;font-size:11.6px;line-height:11.6px;color:#6a6a6a;font-weight:400;font-style:normal;font-family:'Liberation Sans',sans-serif;transform:scaleX(0.8200)">191</div>
<div class=t style="left:81.42px;transform-origin:0 0;top:349.00px;font-size:17.2px;line-height:17.2px;color:#222;font-weight:400;font-style:normal;font-family:'Liberation Sans',sans-serif;transform:scaleX(0.8766)">Bands</div>
<div class=t style="left:333.84px;transform-origin:0 0;top:350.00px;font-size:11.6px;line-height:11.6px;color:#6a6a6a;font-weight:400;font-style:normal;font-family:'Liberation Sans',sans-serif;transform:scaleX(0.8200)">10</div>
<div class=t style="left:81.42px;transform-origin:0 0;top:376.00px;font-size:17.2px;line-height:17.2px;color:#222;font-weight:400;font-style:normal;font-family:'Liberation Sans',sans-serif;transform:scaleX(0.8823)">Buying/Selling Pressure</div>
<div class=t style="left:333.84px;transform-origin:0 0;top:377.00px;font-size:11.6px;line-height:11.6px;color:#6a6a6a;font-weight:400;font-style:normal;font-family:'Liberation Sans',sans-serif;transform:scaleX(0.8200)">30</div>
<div class=t style="left:81.44px;transform-origin:0 0;top:403.00px;font-size:17.2px;line-height:17.2px;color:#222;font-weight:400;font-style:normal;font-family:'Liberation Sans',sans-serif;transform:scaleX(0.8613)">Channel</div>
<div class=t style="left:339.58px;transform-origin:0 0;top:404.00px;font-size:11.6px;line-height:11.6px;color:#6a6a6a;font-weight:400;font-style:normal;font-family:'Liberation Sans',sans-serif;transform:scaleX(0.8200)">6</div>
<div class=t style="left:81.41px;transform-origin:0 0;top:430.00px;font-size:17.2px;line-height:17.2px;color:#222;font-weight:400;font-style:normal;font-family:'Liberation Sans',sans-serif;transform:scaleX(0.8950)">Chart Pattern</div>
<div class=t style="left:339.58px;transform-origin:0 0;top:431.00px;font-size:11.6px;line-height:11.6px;color:#6a6a6a;font-weight:400;font-style:normal;font-family:'Liberation Sans',sans-serif;transform:scaleX(0.8200)">5</div>
<div class=t style="left:81.41px;transform-origin:0 0;top:457.00px;font-size:17.2px;line-height:17.2px;color:#222;font-weight:400;font-style:normal;font-family:'Liberation Sans',sans-serif;transform:scaleX(0.8927)">Computation</div>
<div class=t style="left:339.58px;transform-origin:0 0;top:458.00px;font-size:11.6px;line-height:11.6px;color:#6a6a6a;font-weight:400;font-style:normal;font-family:'Liberation Sans',sans-serif;transform:scaleX(0.8200)">9</div>
<div class=t style="left:81.44px;transform-origin:0 0;top:484.00px;font-size:17.2px;line-height:17.2px;color:#222;font-weight:400;font-style:normal;font-family:'Liberation Sans',sans-serif;transform:scaleX(0.8600)">Cycles</div>
<div class=t style="left:339.58px;transform-origin:0 0;top:485.00px;font-size:11.6px;line-height:11.6px;color:#6a6a6a;font-weight:400;font-style:normal;font-family:'Liberation Sans',sans-serif;transform:scaleX(0.8200)">2</div>
<div class=t style="left:81.43px;transform-origin:0 0;top:511.00px;font-size:17.2px;line-height:17.2px;color:#222;font-weight:400;font-style:normal;font-family:'Liberation Sans',sans-serif;transform:scaleX(0.8721)">Highs &amp; Lows</div>
<div class=t style="left:339.58px;transform-origin:0 0;top:512.00px;font-size:11.6px;line-height:11.6px;color:#6a6a6a;font-weight:400;font-style:normal;font-family:'Liberation Sans',sans-serif;transform:scaleX(0.8200)">6</div>
<div class=t style="left:81.39px;transform-origin:0 0;top:538.00px;font-size:17.2px;line-height:17.2px;color:#222;font-weight:400;font-style:normal;font-family:'Liberation Sans',sans-serif;transform:scaleX(0.9071)">Momentum</div>
<div class=t style="left:333.84px;transform-origin:0 0;top:539.00px;font-size:11.6px;line-height:11.6px;color:#6a6a6a;font-weight:400;font-style:normal;font-family:'Liberation Sans',sans-serif;transform:scaleX(0.8200)">45</div>
<div class=t style="left:81.42px;transform-origin:0 0;top:565.00px;font-size:17.2px;line-height:17.2px;color:#222;font-weight:400;font-style:normal;font-family:'Liberation Sans',sans-serif;transform:scaleX(0.8814)">Overbought/Oversold</div>
<div class=t style="left:339.58px;transform-origin:0 0;top:566.00px;font-size:11.6px;line-height:11.6px;color:#6a6a6a;font-weight:400;font-style:normal;font-family:'Liberation Sans',sans-serif;transform:scaleX(0.8200)">2</div>
<div class=t style="left:81.41px;transform-origin:0 0;top:592.00px;font-size:17.2px;line-height:17.2px;color:#222;font-weight:400;font-style:normal;font-family:'Liberation Sans',sans-serif;transform:scaleX(0.8887)">Performance</div>
<div class=t style="left:333.84px;transform-origin:0 0;top:593.00px;font-size:11.6px;line-height:11.6px;color:#6a6a6a;font-weight:400;font-style:normal;font-family:'Liberation Sans',sans-serif;transform:scaleX(0.8200)">10</div>
<div class=t style="left:81.41px;transform-origin:0 0;top:618.00px;font-size:17.2px;line-height:17.2px;color:#222;font-weight:400;font-style:normal;font-family:'Liberation Sans',sans-serif;transform:scaleX(0.8868)">Point &amp; Figure Pattern</div>
<div class=t style="left:339.58px;transform-origin:0 0;top:620.00px;font-size:11.6px;line-height:11.6px;color:#6a6a6a;font-weight:400;font-style:normal;font-family:'Liberation Sans',sans-serif;transform:scaleX(0.8200)">5</div>
<div class=t style="left:81.44px;transform-origin:0 0;top:645.00px;font-size:17.2px;line-height:17.2px;color:#222;font-weight:400;font-style:normal;font-family:'Liberation Sans',sans-serif;transform:scaleX(0.8632)">Seasonal &amp; Forwards</div>
<div class=t style="left:339.58px;transform-origin:0 0;top:647.00px;font-size:11.6px;line-height:11.6px;color:#6a6a6a;font-weight:400;font-style:normal;font-family:'Liberation Sans',sans-serif;transform:scaleX(0.8200)">5</div>
<div class=t style="left:81.43px;transform-origin:0 0;top:672.00px;font-size:17.2px;line-height:17.2px;color:#222;font-weight:400;font-style:normal;font-family:'Liberation Sans',sans-serif;transform:scaleX(0.8698)">Spread</div>
<div class=t style="left:339.58px;transform-origin:0 0;top:674.00px;font-size:11.6px;line-height:11.6px;color:#6a6a6a;font-weight:400;font-style:normal;font-family:'Liberation Sans',sans-serif;transform:scaleX(0.8200)">5</div>
<div class=t style="left:81.36px;transform-origin:0 0;top:699.00px;font-size:17.2px;line-height:17.2px;color:#222;font-weight:400;font-style:normal;font-family:'Liberation Sans',sans-serif;transform:scaleX(0.9407)">Statistic</div>
<div class=t style="left:339.58px;transform-origin:0 0;top:701.00px;font-size:11.6px;line-height:11.6px;color:#6a6a6a;font-weight:400;font-style:normal;font-family:'Liberation Sans',sans-serif;transform:scaleX(0.8200)">9</div>
<div class=t style="left:562.40px;transform-origin:0 0;top:68.00px;font-size:16px;line-height:16px;color:#111;font-weight:400;font-style:normal;font-family:'Liberation Sans',sans-serif;transform:scaleX(0.7912)">Woodstock-Volume</div>
<div class=t style="left:936.13px;transform-origin:0 0;top:98.00px;font-size:11.5px;line-height:11.5px;color:#4a4a4a;font-weight:400;font-style:normal;font-family:'Liberation Sans',sans-serif;transform:scaleX(1.0667)">DAX Perf. Index</div>
<div class=t style="left:1027.89px;transform-origin:0 0;top:98.00px;font-size:11.5px;line-height:11.5px;color:#ff1010;font-weight:400;font-style:normal;font-family:'Liberation Sans',sans-serif;transform:scaleX(1.1138)">C:12951,40</div>
<div class=t style="left:1097.70px;transform-origin:0 0;top:98.00px;font-size:11.5px;line-height:11.5px;color:#ff1010;font-weight:400;font-style:normal;font-family:'Liberation Sans',sans-serif;transform:scaleX(1.1000)">-91,6</div>
<div class=t style="left:8.06px;transform-origin:0 0;top:284.00px;font-size:21px;line-height:21px;color:#555;font-weight:700;font-style:italic;font-family:'Liberation Sans',sans-serif;transform:scaleX(1.0419)">f(x)</div>
<div class=t style="left:390.90px;transform-origin:0 0;top:62.00px;font-size:12.5px;line-height:12.5px;color:#555;font-weight:400;font-style:normal;font-family:'Liberation Sans',sans-serif;transform:scaleX(0.9214)">ab</div>
<div class=t style="left:399.62px;transform-origin:0 0;top:72.00px;font-size:13.2px;line-height:13.2px;color:#555;font-weight:400;font-style:normal;font-family:'Liberation Sans',sans-serif;transform:scaleX(0.8846)">ac</div>
</body></html>
